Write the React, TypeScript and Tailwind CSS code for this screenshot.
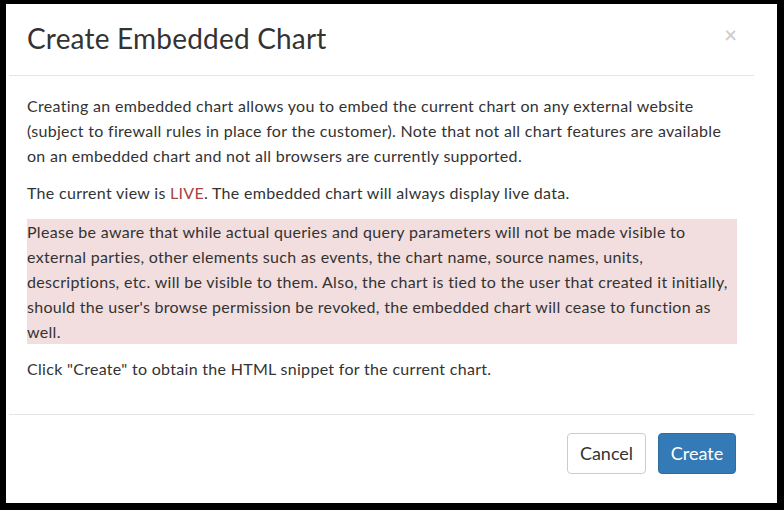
import React from 'react';

export default function App() {
  return (
    <div className="w-[784px] h-[510px] bg-black pl-[6px] pt-[4px] pr-[7px] pb-[7px]" style={{ fontFamily: 'Lato, "Open Sans", sans-serif' }}>
      <div className="w-full h-full bg-white pl-[3px]">
        <div className="w-[745px] flex flex-col text-[#333333]">
          {/* Header */}
          <div className="relative h-[72px] border-b border-[#e5e5e5] px-[18px] pb-[4px] flex items-center">
            <h4 className="text-[28px] leading-none tracking-[0.2px]">Create Embedded Chart</h4>
            <button className="absolute right-[17px] top-[20px] text-[22px] font-bold leading-none text-black/20">×</button>
          </div>

          {/* Body */}
          <div className="pl-[18px] pr-[17px] pt-[17px] pb-[33px] text-[16px] leading-[25px] tracking-[0.3px]">
            <p>
              Creating an embedded chart allows you to embed the current chart on any external website<br />
              (subject to firewall rules in place for the customer). Note that not all chart features are available<br />
              on an embedded chart and not all browsers are currently supported.
            </p>
            <p className="mt-[12px]">
              The current view is <span className="text-[#a94442]">LIVE</span>. The embedded chart will always display live data.
            </p>
            <div className="mt-[14px] bg-[#f2dede]">
              Please be aware that while actual queries and query parameters will not be made visible to<br />
              external parties, other elements such as events, the chart name, source names, units,<br />
              descriptions, etc. will be visible to them. Also, the chart is tied to the user that created it initially,<br />
              should the user's browse permission be revoked, the embedded chart will cease to function as<br />
              well.
            </div>
            <p className="mt-[12px]">Click "Create" to obtain the HTML snippet for the current chart.</p>
          </div>

          {/* Footer */}
          <div className="border-t border-[#e5e5e5] pt-[18px] pr-[18px] flex justify-end gap-[12px]">
            <button className="w-[79px] h-[41px] rounded-[4px] border border-[#cccccc] bg-white text-[18px] text-[#333333]">Cancel</button>
            <button className="w-[78px] h-[41px] rounded-[4px] border border-[#2e6da4] bg-[#337ab7] text-[18px] text-white">Create</button>
          </div>
        </div>
      </div>
    </div>
  );
}
